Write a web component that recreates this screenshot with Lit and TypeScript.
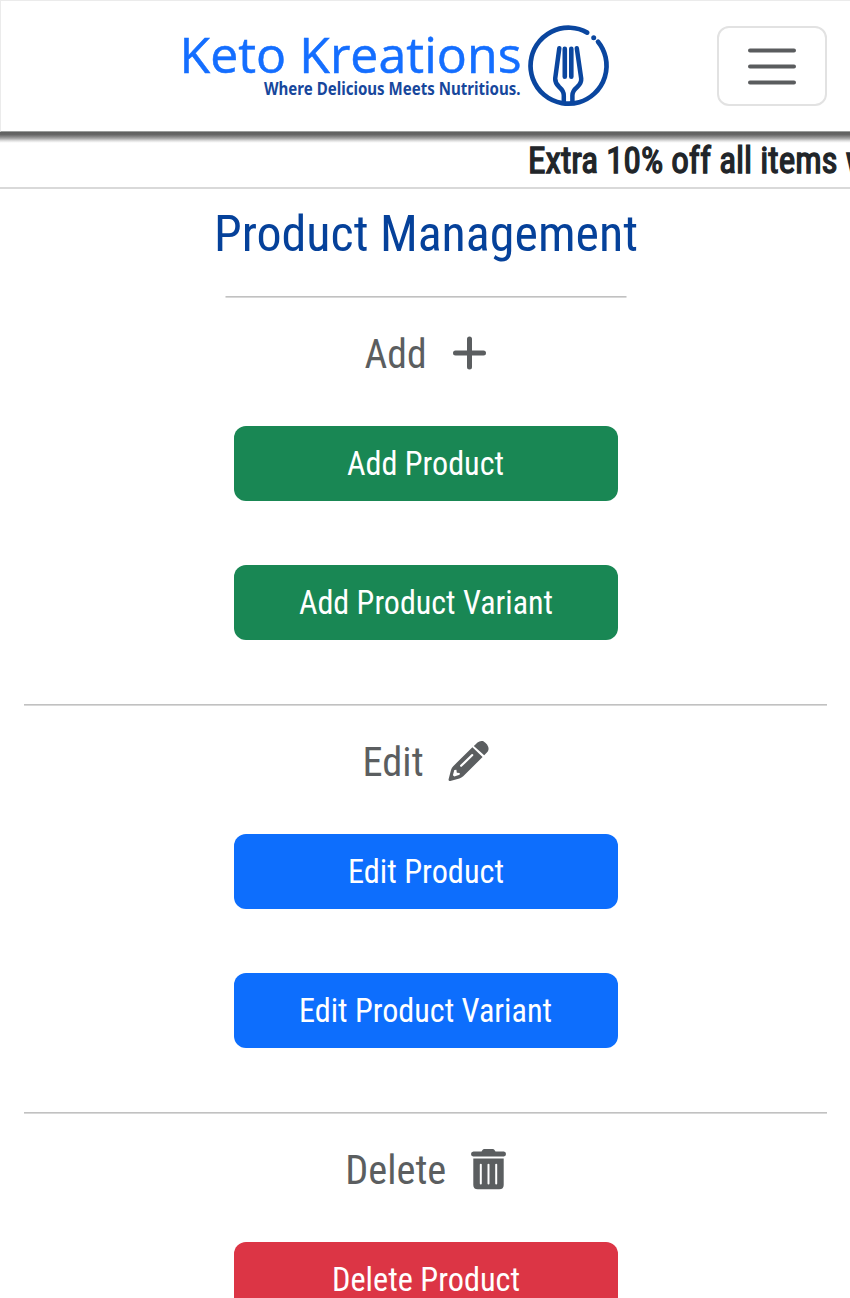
import { LitElement, html, css, svg } from "lit";
import { customElement } from "lit/decorators.js";

// One line of condensed text, set to a fixed advance width.
const line = (
  text: string,
  cls: string,
  width: number,
  height: number,
  baseline: number,
  x = 0,
  length = width
) => html`<svg class="line ${cls}" width=${width} height=${height} viewBox="0 0 ${width} ${height}">
  <text x=${x} y=${baseline} textLength=${length} lengthAdjust="spacingAndGlyphs">${text}</text>
</svg>`;

const plus = html`<svg class="icon" width="34" height="34" viewBox="0 0 34 34">
  <path d="M16.5 3V31M2.5 17H30.5" fill="none" stroke="currentColor" stroke-width="5" stroke-linecap="round" />
</svg>`;

const pencil = html`<svg class="icon" width="41" height="41" viewBox="0 0 41 41">
  <path fill="currentColor" d="M27.2 3.8L29.5 1.5Q32 -.7 35 .1Q40.3 3.3 40.6 8Q40.4 10 38.9 11.6L36.2 14.3L25.8 4.9Z" />
  <path fill="currentColor" fill-rule="evenodd" d="M24.4 6.2L34.6 16L15.2 35.3Q13.5 36.9 11.4 37.5L2.3 40Q.3 40.3.6 38.3L3 28.9Q3.6 26.8 5.2 25.2ZM23.5 13.2L12.3 24.1Q11.7 24.9 12.4 25.6Q13.1 26.3 13.9 25.6L25.1 14.8Q25.7 14 25 13.3Q24.2 12.6 23.5 13.2ZM6.3 28.9L4.9 34.2L6.3 35.5L11.6 33.8L11.8 32.1L8.8 31.7L8.4 28.7Z" />
</svg>`;

const trash = html`<svg class="icon" width="36" height="41" viewBox="0 0 36 41">
  <path fill="currentColor" d="M2.5 2.5H10.5L11.7.7Q12.2 0 13.2 0H21.8Q22.8 0 23.3.7L24.5 2.5H32.9Q35 2.8 35 5T32.9 7.5H2.1Q0 7.2 0 5T2.5 2.5Z" />
  <path fill="currentColor" fill-rule="evenodd" d="M2.3 9.6H32.7V36Q32.7 40.2 28.3 40.2H6.7Q2.3 40.2 2.3 36ZM8.8 15.6V34.5Q8.8 35.5 9.8 35.5T10.8 34.5V15.6Q10.8 14.7 9.8 14.7T8.8 15.6ZM16.5 15.6V34.5Q16.5 35.5 17.5 35.5T18.5 34.5V15.6Q18.5 14.7 17.5 14.7T16.5 15.6ZM24.2 15.6V34.5Q24.2 35.5 25.2 35.5T26.2 34.5V15.6Q26.2 14.7 25.2 14.7T24.2 15.6Z" />
</svg>`;

const fork = svg`<g fill="none" stroke="#0a469f" stroke-linecap="round" stroke-linejoin="round">
  <path d="M407.2 7.6A38 38 0 1 0 418 16.7" stroke-width="4.7" />
  <circle cx="413.7" cy="12.8" r="2.5" fill="#0a469f" stroke="none" />
  <path d="M379.3 23.2L375.2 53.5Q375 58 379.2 62Q383.8 66 383.8 70.5V77M396.8 23.2L401.2 53.5Q401.6 58 397.2 62Q392.4 66 392.4 70.5V77" stroke-width="4.5" />
  <path d="M384.8 23.7V51.7M391.3 23.7V51.7" stroke-width="4.6" />
</g>`;

type Item = { text: string; width: number };
type Section = { title: string; width: number; shift: number; gap: number; icon: unknown; kind: string; items: Item[] };

const sections: Section[] = [
  { title: "Add", width: 62, shift: -0.5, gap: 26, icon: plus, kind: "success",
    items: [{ text: "Add Product", width: 157 }, { text: "Add Product Variant", width: 254 }] },
  { title: "Edit", width: 61, shift: 0.6, gap: 25, icon: pencil, kind: "primary",
    items: [{ text: "Edit Product", width: 156 }, { text: "Edit Product Variant", width: 253 }] },
  { title: "Delete", width: 101, shift: 0.3, gap: 25, icon: trash, kind: "danger",
    items: [{ text: "Delete Product", width: 188 }] },
];

@customElement("app-root")
export class AppRoot extends LitElement {
  static styles = css`
    :host {
      display: block;
      height: 1298px;
      overflow: hidden;
      background: #fff;
      color: #212529;
      font-family: "Roboto Condensed", Roboto, sans-serif;
      font-stretch: 75%;
    }
    * { box-sizing: border-box; }
    svg { display: block; flex: none; overflow: visible; }
    .line text { fill: currentColor; }
    .nav {
      position: relative;
      display: flex;
      align-items: flex-start;
      justify-content: space-between;
      height: 132px;
      padding: 24px 23px 0 179px;
      border: 1px solid #ebebeb;
      border-right: 0;
      border-bottom-color: #9a9c9b;
      background: #fff;
    }
    .nav::after {
      content: "";
      position: absolute;
      top: 100%;
      left: -1px;
      right: 0;
      height: 11px;
      margin-top: 1px;
      background: linear-gradient(#5f605f, #666 24%, #858585 42%, #aaa 60%, #dadada 78%, #f5f5f5 92%, #fff);
    }
    .name { font: 400 50px "Open Sans", sans-serif; fill: #146eff; stroke: #146eff; stroke-width: .5px; }
    .tag { font: 700 17px "Noto Sans", sans-serif; fill: #17479c; }
    .toggler {
      display: grid;
      place-items: center;
      width: 110px;
      height: 80px;
      margin-top: 1px;
      padding: 0;
      border: 2px solid #e2e2e2;
      border-radius: 12px;
      background: none;
      color: #5a5c5e;
    }
    .ticker {
      display: flex;
      height: 57px;
      padding-left: 528px;
      overflow: hidden;
      border-bottom: 2px solid #d9d9d9;
    }
    .promo { font-size: 36px; font-weight: 400; }
    .promo text { stroke: currentColor; stroke-width: 1.3px; }
    .main { padding: 0 23px 0 24px; }
    .head { display: flex; justify-content: center; height: 107px; color: #05419a; }
    .title { font-size: 50px; }
    .rule { height: 2px; margin: 0; border: 0; background: linear-gradient(#c1c1c1 50%, #d8d8d8 50%); }
    .short { width: 401px; margin: 0 auto; transform: translateX(.5px); }
    .section { display: flex; flex-direction: column; align-items: center; height: 406px; color: #5b5e60; }
    .row { display: flex; align-items: center; height: 40px; margin: 35px 0 53px; }
    .label { font-size: 40px; }
    .btn {
      display: flex;
      flex: none;
      justify-content: center;
      width: 384px;
      height: 75px;
      margin: 0 0 64px;
      padding: 0;
      border: 0;
      border-radius: 12px;
      color: #fff;
      font-family: inherit;
      font-stretch: inherit;
    }
    .cap { font-size: 33px; }
    .success { background: #198754; }
    .primary { background: #0d6efd; }
    .danger { background: #dc3545; }
  `;

  render() {
    return html`
      <nav class="nav">
        <svg width="432" height="84" viewBox="0 0 432 84">
          <text class="name" x="-.5" y="48.2" textLength="342" lengthAdjust="spacingAndGlyphs">Keto Kreations</text>
          <text class="tag" x="84" y="69.5" textLength="256.5" lengthAdjust="spacingAndGlyphs">Where Delicious Meets Nutritious.</text>
          ${fork}
        </svg>
        <button class="toggler" aria-label="Menu">
          <svg width="48" height="40" viewBox="0 0 48 40">
            <path d="M2 4.5H46M2 20.5H46M2 36.5H46" fill="none" stroke="currentColor" stroke-width="4" stroke-linecap="round" />
          </svg>
        </button>
      </nav>
      <div class="ticker">${line("Extra 10% off all items with", "promo", 376, 55, 41.3, 0)}</div>
      <main class="main">
        <div class="head">${line("Product Management", "title", 424, 107, 62)}</div>
        ${sections.map((s, i) => html`
          <hr class="rule ${i === 0 ? "short" : ""}" />
          <section class="section">
            <div class="row" style="gap:${s.gap}px">
              ${line(s.title, "label", s.width, 40, 34.8, s.shift)}${s.icon}
            </div>
            ${s.items.map((b) => html`<button class="btn ${s.kind}">${line(b.text, "cap", b.width, 75, 49)}</button>`)}
          </section>`)}
      </main>
    `;
  }
}
